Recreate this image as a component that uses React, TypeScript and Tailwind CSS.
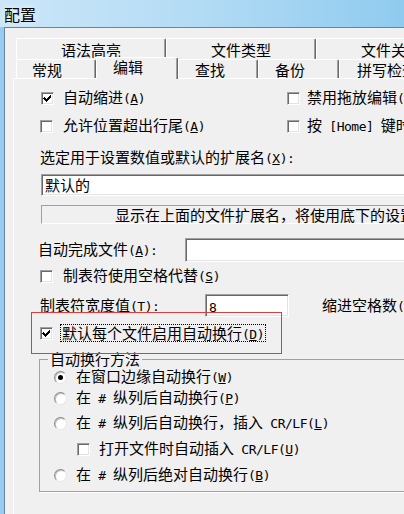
import React from "react";

const sunken =
  "bg-white border border-t-[#a0a0a0] border-l-[#a0a0a0] border-r-white border-b-white shadow-[inset_1px_1px_0_#696969,inset_-1px_-1px_0_#e3e3e3]";

const mono = "font-['DejaVu_Sans_Mono',monospace] text-[13px] tracking-[-0.5px]";

function M({ children }: { children: React.ReactNode }) {
  return <span className={mono}>{children}</span>;
}

function Check({ checked = false }: { checked?: boolean }) {
  return (
    <span className={`shrink-0 w-[13px] h-[13px] flex items-center justify-center ${sunken}`}>
      {checked && (
        <svg width="9" height="9" viewBox="0 0 9 9" shapeRendering="crispEdges">
          <path d="M1 3h1v1h1v1h1v-1h1v-1h1v-1h1v-1h1v3h-1v1h-1v1h-1v1h-1v1h-1v-1h-1v-1h-1v-1h-1z" fill="#000" />
        </svg>
      )}
    </span>
  );
}

function Radio({ checked = false }: { checked?: boolean }) {
  return (
    <span className="shrink-0 w-[13px] h-[13px] rounded-full bg-white border border-t-[#8a8a8a] border-l-[#8a8a8a] border-r-[#e6e6e6] border-b-[#e6e6e6] shadow-[inset_1px_1px_0_#c4c4c4] flex items-center justify-center">
      {checked && <span className="w-[5px] h-[5px] rounded-full bg-black" />}
    </span>
  );
}

function Lbl({ pre, k, tail = "" }: { pre: React.ReactNode; k: string; tail?: string }) {
  return (
    <span className="whitespace-nowrap">
      {pre}
      <M>
        (<u>{k}</u>){tail}
      </M>
    </span>
  );
}

const tabBase =
  "shrink-0 bg-[#f0f0f0] border-t border-l border-t-white border-l-white border-r border-r-[#696969] shadow-[inset_-1px_0_0_#a0a0a0] rounded-tr-[2px] whitespace-nowrap overflow-hidden";

export default function App() {
  return (
    <div className="relative w-[404px] h-[514px] overflow-hidden flex flex-col bg-[#95cdf0] text-black font-['Noto_Sans_CJK_SC',sans-serif] text-[15px]">
      {/* title bar */}
      <div className="h-[27px] shrink-0 flex items-center pl-[4px] bg-gradient-to-r from-[#cce6f8] via-[#b2dbf4] to-[#8fcbef]">
        <span className="text-[16px] leading-[20px] [text-shadow:0_0_6px_#ffffff]">配置</span>
      </div>

      {/* window body */}
      <div className="flex-1 ml-[4px] border-l border-t border-[#6e8396] bg-[#f0f0f0] pt-[10px] pl-[8px] flex flex-col min-w-0">
        {/* tabs row 1 */}
        <div className="flex h-[21px] ml-[3px]">
          <div className={`${tabBase} w-[150px] text-center leading-[21px]`}>语法高亮</div>
          <div className={`${tabBase} w-[150px] text-center leading-[21px]`}>文件类型</div>
          <div className={`${tabBase} w-[150px] text-center leading-[21px]`}>文件关联</div>
        </div>
        {/* tabs row 2 */}
        <div className="flex items-end h-[19px] ml-[3px] relative z-10">
          <div className={`${tabBase} w-[80px] h-[19px] pl-[15px] leading-[19px]`}>常规</div>
          <div className="shrink-0 w-[82px] h-[22px] -mb-px bg-[#f0f0f0] border-t border-l border-t-white border-l-white border-r border-r-[#696969] shadow-[inset_-1px_0_0_#a0a0a0] rounded-tr-[2px] pl-[16px] leading-[18px] whitespace-nowrap">
            编辑
          </div>
          <div className={`${tabBase} w-[80px] h-[19px] pl-[16px] leading-[19px]`}>查找</div>
          <div className={`${tabBase} w-[81px] h-[19px] pl-[16px] leading-[19px]`}>备份</div>
          <div className={`${tabBase} w-[120px] h-[19px] pl-[17px] leading-[19px]`}>拼写检查</div>
        </div>

        {/* panel */}
        <div className="flex-1 border-t border-l border-white pl-[26px] flex flex-col whitespace-nowrap">
          {/* row A */}
          <div className="mt-[9px] h-[20px] flex items-center shrink-0">
            <div className="w-[247px] shrink-0 flex items-center pl-[1px]">
              <Check checked />
              <span className="ml-[9px] leading-[20px]">
                <Lbl pre="自动缩进" k="A" />
              </span>
            </div>
            <div className="flex items-center shrink-0">
              <Check />
              <span className="ml-[7px] leading-[20px]">
                <Lbl pre="禁用拖放编辑" k="G" />
              </span>
            </div>
          </div>
          {/* row B */}
          <div className="mt-[8px] h-[20px] flex items-center shrink-0">
            <div className="w-[247px] shrink-0 flex items-center">
              <Check />
              <span className="ml-[10px] leading-[20px]">
                <Lbl pre="允许位置超出行尾" k="A" />
              </span>
            </div>
            <div className="flex items-center shrink-0">
              <Check />
              <span className="ml-[7px] leading-[20px]">
                按<M>&nbsp;[Home]&nbsp;</M>键时跳到行首
              </span>
            </div>
          </div>
          {/* label */}
          <div className="mt-[11px] h-[20px] leading-[20px] shrink-0">
            <Lbl pre="选定用于设置数值或默认的扩展名" k="X" tail=":" />
          </div>
          {/* ext input */}
          <div className={`mt-[7px] ml-[1px] h-[22px] w-[420px] shrink-0 pl-[3px] leading-[20px] ${sunken}`}>默认的</div>
          {/* static box */}
          <div className="mt-[9px] ml-[1px] h-[19px] w-[520px] shrink-0 border border-t-[#a0a0a0] border-l-[#a0a0a0] border-r-white border-b-white pl-[73px] leading-[17px]">
            显示在上面的文件扩展名，将使用底下的设置
          </div>
          {/* auto complete */}
          <div className="mt-[14px] h-[24px] flex items-center shrink-0 -ml-[2px]">
            <span className="w-[147px] shrink-0 leading-[20px]">
              <Lbl pre="自动完成文件" k="A" tail=":" />
            </span>
            <div className={`h-[24px] w-[300px] shrink-0 ${sunken}`} />
          </div>
          {/* tabs as spaces */}
          <div className="mt-[4px] h-[20px] flex items-center shrink-0">
            <Check />
            <span className="ml-[10px] leading-[20px]">
              <Lbl pre="制表符使用空格代替" k="S" />
            </span>
          </div>
          {/* tab width */}
          <div className="mt-[8px] h-[23px] flex items-center shrink-0">
            <span className="w-[165px] shrink-0 leading-[20px]">
              <Lbl pre="制表符宽度值" k="T" tail=":" />
            </span>
            <div className={`h-[23px] w-[84px] shrink-0 pl-[3px] leading-[21px] ${sunken}`}>
              <M>8</M>
            </div>
            <span className="ml-[33px] leading-[20px]">
              <Lbl pre="缩进空格数" k="I" tail=":" />
            </span>
          </div>
          {/* default wrap */}
          <div className="mt-[6px] h-[20px] flex items-center shrink-0">
            <Check checked />
            <span className="ml-[7px] h-[18px] px-[1px] border border-dotted border-black leading-[16px]">
              <Lbl pre="默认每个文件启用自动换行" k="D" />
            </span>
          </div>
          {/* group box */}
          <fieldset className="mt-[8px] -ml-[1px] w-[520px] shrink-0 p-0 pb-[6px] pl-[14px] m-0 border border-[#a0a0a0] shadow-[1px_1px_0_#ffffff]">
            <legend className="ml-[-6px] px-[2px] leading-[16px] h-[16px]">自动换行方法</legend>
            <div className="h-[20px] flex items-center">
              <Radio checked />
              <span className="ml-[9px] leading-[20px]">
                <Lbl pre="在窗口边缘自动换行" k="W" />
              </span>
            </div>
            <div className="mt-[1px] h-[20px] flex items-center">
              <Radio />
              <span className="ml-[9px] leading-[20px]">
                <Lbl pre={<>在<M>&nbsp;#&nbsp;</M>纵列后自动换行</>} k="P" />
              </span>
            </div>
            <div className="mt-[5px] h-[20px] flex items-center">
              <Radio />
              <span className="ml-[9px] leading-[20px]">
                <Lbl pre={<>在<M>&nbsp;#&nbsp;</M>纵列后自动换行，插入<M>&nbsp;CR/LF</M></>} k="L" />
              </span>
            </div>
            <div className="mt-[6px] h-[20px] flex items-center pl-[23px]">
              <Check />
              <span className="ml-[9px] leading-[20px]">
                <Lbl pre={<>打开文件时自动插入<M>&nbsp;CR/LF</M></>} k="U" />
              </span>
            </div>
            <div className="mt-[6px] h-[20px] flex items-center">
              <Radio />
              <span className="ml-[9px] leading-[20px]">
                <Lbl pre={<>在<M>&nbsp;#&nbsp;</M>纵列后绝对自动换行</>} k="B" />
              </span>
            </div>
          </fieldset>
        </div>
      </div>

      {/* red annotation rectangle */}
      <div className="absolute left-[31px] top-[312px] w-[251px] h-[42px] border border-[#e33b3b] pointer-events-none" />
    </div>
  );
}
